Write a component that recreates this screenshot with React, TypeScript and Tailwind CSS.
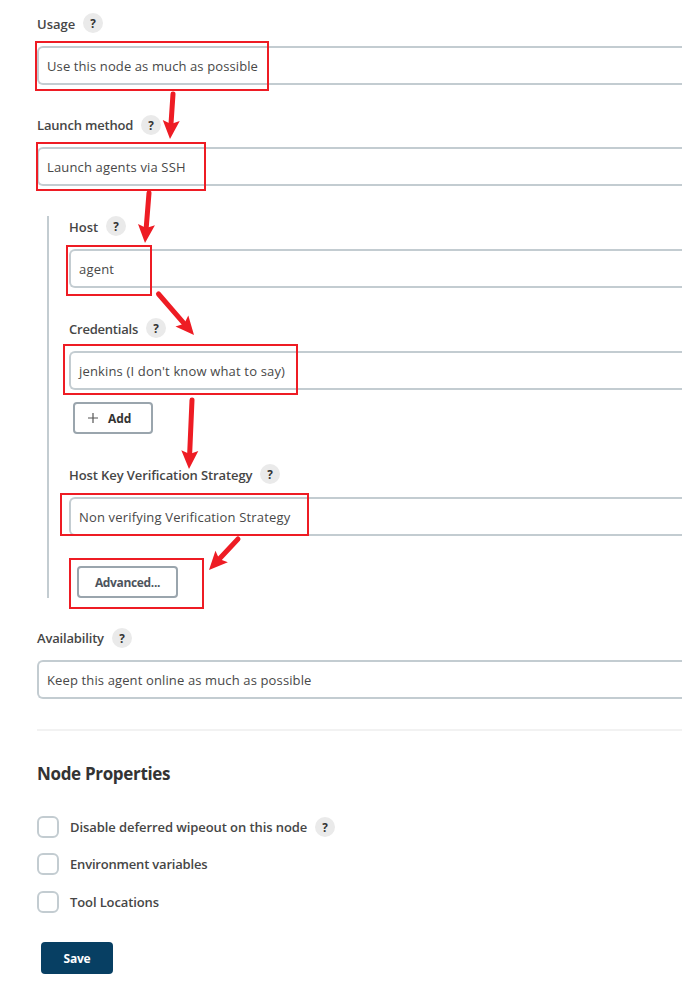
import React from "react";

function Help() {
  return (
    <span className="flex h-5 w-5 shrink-0 items-center justify-center rounded-full bg-[#eaeaea] text-[13px] leading-5 font-bold text-[#333]">
      <span className="scale-x-90">?</span>
    </span>
  );
}

function Label({ text, track }: { text: string; track: string }) {
  return (
    <div className="flex h-5 items-center gap-2">
      <span className={`text-[13px] leading-5 font-semibold whitespace-nowrap text-[#464646] ${track}`}>{text}</span>
      <Help />
    </div>
  );
}

function Field({ text, track }: { text: string; track: string }) {
  return (
    <div className="flex h-[39px] items-center rounded-l-md border-2 border-r-0 border-[#c3ccd1] bg-white pl-2">
      <span className={`text-[13px] leading-5 whitespace-nowrap text-[#484848] ${track}`}>{text}</span>
    </div>
  );
}

function Check({ text, track, help }: { text: string; track: string; help?: boolean }) {
  return (
    <div className="flex h-[22px] items-center">
      <span className="h-[22px] w-[22px] shrink-0 rounded-md border-2 border-[#c3ccd1] bg-white" />
      <span className={`mr-2 ml-[11px] text-[13px] leading-5 font-semibold whitespace-nowrap text-[#464646] ${track}`}>{text}</span>
      {help && <Help />}
    </div>
  );
}

function Arrow({ x1, y1, x2, y2 }: { x1: number; y1: number; x2: number; y2: number }) {
  const len = Math.hypot(x2 - x1, y2 - y1);
  const angle = (Math.atan2(y2 - y1, x2 - x1) * 180) / Math.PI;
  return (
    <g transform={`translate(${x1} ${y1}) rotate(${angle})`}>
      <line x1={0} y1={0} x2={len - 14} y2={0} strokeWidth={5} strokeLinecap="round" stroke="#ee1c24" />
      <polygon points={`${len},0 ${len - 18.5},-8.5 ${len - 15},0 ${len - 18.5},8.5`} fill="#ee1c24" />
    </g>
  );
}

export default function App() {
  return (
    <div className="relative h-[987px] w-[682px] overflow-hidden bg-white pt-[13px] pl-[37px] font-['Open_Sans','Noto_Sans',sans-serif]">
      <Label text="Usage" track="pt-0.5" />
      <div className="mt-[13px]"><Field text="Use this node as much as possible" track="tracking-[0.11px]" /></div>

      <div className="mt-[30px]"><Label text="Launch method" track="tracking-[-0.18px]" /></div>
      <div className="mt-3"><Field text="Launch agents via SSH" track="tracking-[0.15px]" /></div>

      <div className="mt-[30px] ml-[10px] h-[382px] border-l-2 border-[#c3ccd1] pl-5">
        <Label text="Host" track="pt-0.5" />
        <div className="mt-[13px]"><Field text="agent" track="tracking-[0.2px]" /></div>

        <div className="mt-[30px]"><Label text="Credentials" track="pt-0.5 tracking-[-0.22px]" /></div>
        <div className="mt-[13px]"><Field text="jenkins (I don't know what to say)" track="tracking-[0.16px]" /></div>
        <button className="mt-3 ml-1 flex h-8 w-20 items-center rounded border-2 border-[#9aa5ad] bg-white pl-[13px]">
          <svg className="h-[10px] w-[10px]" viewBox="0 0 10 10" stroke="#555" strokeWidth="1.2">
            <path d="M5 0V10M0 5H10" />
          </svg>
          <span className="ml-[10px] pt-0.5 text-[12px] leading-5 font-bold text-[#333]">Add</span>
        </button>

        <div className="mt-[30px]"><Label text="Host Key Verification Strategy" track="pt-0.5 tracking-[-0.1px]" /></div>
        <div className="mt-[13px]"><Field text="Non verifying Verification Strategy" track="tracking-[0.165px]" /></div>
        <button className="mt-[30px] ml-2 flex h-8 w-[101px] items-center justify-center rounded border-2 border-[#9aa5ad] bg-white text-[12px] font-bold text-[#4d545d]">
          <span className="pt-0.5 tracking-[-0.35px]">Advanced...</span>
        </button>
      </div>

      <div className="mt-[30px]"><Label text="Availability" track="tracking-[-0.17px]" /></div>
      <div className="mt-3"><Field text="Keep this agent online as much as possible" track="tracking-[0.13px]" /></div>

      <div className="mt-[30px] h-[2px] bg-[#f2f2f2]" />
      <h2 className="mt-[31px] text-[17px] leading-6 font-bold text-[#333]"><span className="tracking-[-0.33px]">Node Properties</span></h2>

      <div className="mt-[30px]"><Check text="Disable deferred wipeout on this node" track="tracking-[-0.08px]" help /></div>
      <div className="mt-[15px]"><Check text="Environment variables" track="tracking-[-0.19px]" /></div>
      <div className="mt-4"><Check text="Tool Locations" track="tracking-[-0.11px]" /></div>

      <button className="mt-[29px] ml-1 flex h-8 w-[72px] items-center justify-center rounded bg-[#073f63] text-[12px] font-bold text-white">
        <span className="pt-0.5 tracking-[-0.25px]">Save</span>
      </button>

      <div className="absolute top-[41px] left-[35px] h-[50px] w-[234px] border-2 border-[#ee1c24]" />
      <div className="absolute top-[142px] left-[36px] h-[49px] w-[170px] border-2 border-[#ee1c24]" />
      <div className="absolute top-[245px] left-[66px] h-[51px] w-[86px] border-2 border-[#ee1c24]" />
      <div className="absolute top-[344px] left-[63px] h-[51px] w-[235px] border-2 border-[#ee1c24]" />
      <div className="absolute top-[493px] left-[60px] h-[43px] w-[249px] border-2 border-[#ee1c24]" />
      <div className="absolute top-[558px] left-[69px] h-[51px] w-[135px] border-2 border-[#ee1c24]" />
      <svg className="absolute top-0 left-0" width="682" height="987" viewBox="0 0 682 987">
        <Arrow x1={173} y1={94} x2={170} y2={139} />
        <Arrow x1={149} y1={193} x2={145} y2={243} />
        <Arrow x1={158.5} y1={294} x2={194} y2={335} />
        <Arrow x1={192} y1={400} x2={189} y2={469} />
        <Arrow x1={238} y1={539} x2={209} y2={570} />
      </svg>
    </div>
  );
}
